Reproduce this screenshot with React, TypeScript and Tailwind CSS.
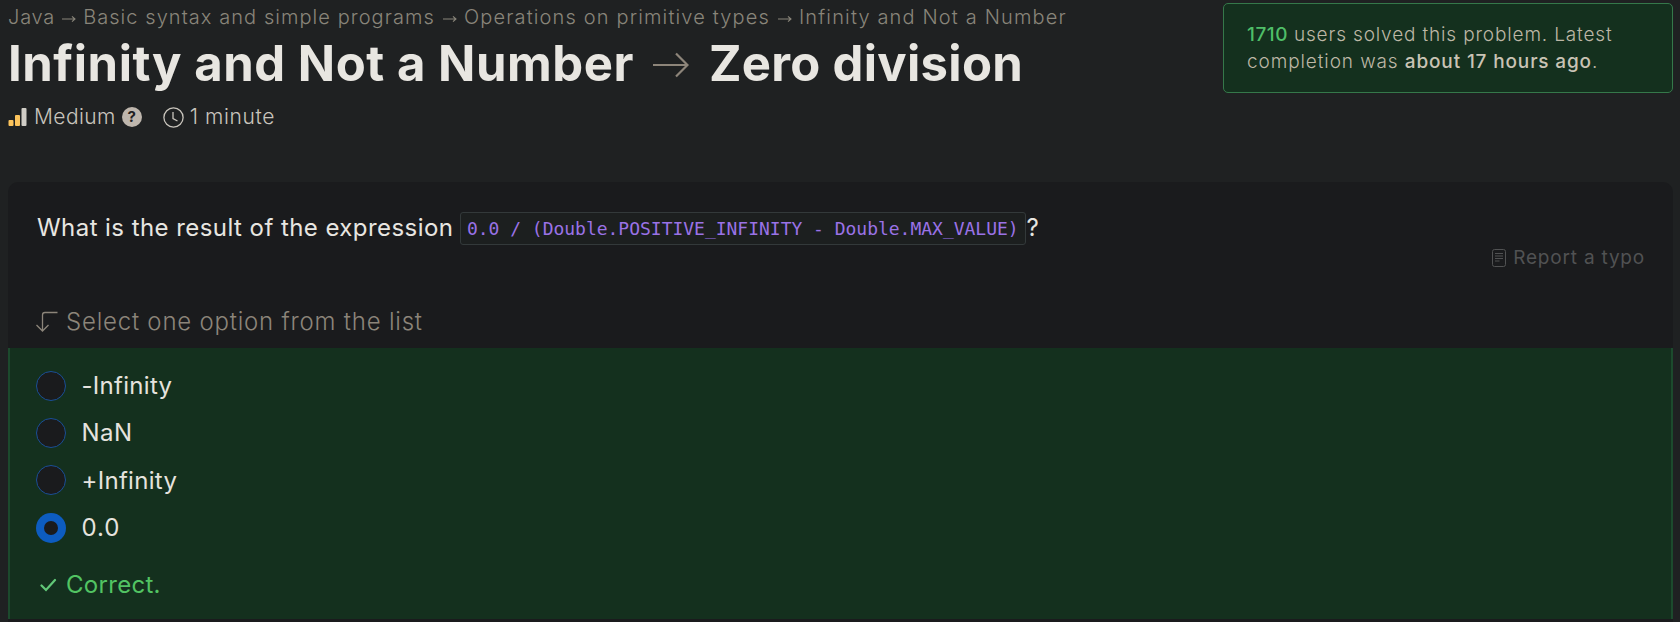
import type { ReactNode } from "react";

function CrumbArrow({ className }: { className: string }) {
  return (
    <svg className={className} width="14" height="8" viewBox="0 0 14 8" fill="none" stroke="currentColor" strokeWidth="1.1">
      <path d="M0 4H13M10 1.3L13 4L10 6.7" />
    </svg>
  );
}

function Option({ label, spacing, checked = false }: { label: string; spacing: string; checked?: boolean }) {
  return (
    <label className="flex h-[47.3px] items-center">
      <span
        className={
          checked
            ? "flex size-[30px] shrink-0 items-center justify-center rounded-full bg-[#0d5cc0]"
            : "size-[30px] shrink-0 rounded-full border border-[#1a4f96] bg-[#1a1b1d]"
        }
      >
        {checked && <span className="size-[14px] rounded-full bg-[#1a1b1d]" />}
      </span>
      <span className={`mt-px ml-[15.5px] text-[24px] leading-[30px] text-[#e6e3de] ${spacing}`}>{label}</span>
    </label>
  );
}

function Crumb({ children, className = "" }: { children: ReactNode; className?: string }) {
  return <span className={className}>{children}</span>;
}

export default function App() {
  return (
    <div className="flex h-[622px] w-[1680px] flex-col overflow-hidden bg-[#1f2122] pr-[7px] pl-2 font-['Inter',sans-serif] whitespace-nowrap">
      <header className="flex h-[182px] shrink-0 items-start justify-between">
        <div>
          <nav className="flex h-[35px] items-center text-[20px] leading-[35px] font-light text-[#89857a]">
            <Crumb className="tracking-[0.8px]">Java</Crumb>
            <CrumbArrow className="mt-[3px] ml-[7px]" />
            <Crumb className="ml-[7px] tracking-[1.06px]">Basic syntax and simple programs</Crumb>
            <CrumbArrow className="mt-[3px] ml-[8px]" />
            <Crumb className="ml-[7px] tracking-[1.15px]">Operations on primitive types</Crumb>
            <CrumbArrow className="mt-[3px] ml-[8px]" />
            <Crumb className="ml-[7px] tracking-[1.15px]">Infinity and Not a Number</Crumb>
          </nav>
          <h1 className="flex h-[58px] items-center text-[49px] leading-[58px] font-bold text-[#e8e6e1]">
            <span className="tracking-[0.54px]">Infinity and Not a Number</span>
            <svg className="mt-[2px] ml-[19px] shrink-0" width="36" height="26" viewBox="0 0 36 26" fill="none" stroke="#8d857a" strokeWidth="2.2">
              <path d="M0 13H34M23 1.5L34.5 13L23 24.5" />
            </svg>
            <span className="ml-[20px] tracking-[0.3px]">Zero division</span>
          </h1>
          <div className="mt-[10px] flex h-[28px] items-center text-[21px] leading-[28px] font-light text-[#c9c5bd]">
            <svg width="19" height="18" viewBox="0 0 19 18">
              <rect x="0.5" y="12" width="5" height="6" rx="1" fill="#fcc45c" />
              <rect x="7" y="7" width="5" height="11" rx="1" fill="#fcc45c" />
              <rect x="13.5" y="0" width="5" height="18" rx="1" fill="#d0cdc6" />
            </svg>
            <span className="ml-[7px] tracking-[0.4px]">Medium</span>
            <span className="ml-[6px] flex size-5 items-center justify-center rounded-full bg-[#beb6ad] text-[15px] leading-5 font-bold text-[#1f2122]">
              ?
            </span>
            <svg className="ml-[21px]" width="21" height="21" viewBox="0 0 21 21" fill="none" stroke="#c9c5bd" strokeWidth="1.3">
              <circle cx="10.5" cy="10.5" r="9.6" />
              <path d="M10 5V11.5L14.5 14" />
            </svg>
            <span className="ml-[6px] tracking-[0.6px]">1 minute</span>
          </div>
        </div>
        <aside className="mt-[3px] h-[90px] w-[450px] rounded-[5px] border border-[#35784a] bg-[#14301e] pt-[17px] pl-[23px] text-[19px] leading-[27px] font-light text-[#bdb7a6]">
          <p>
            <span className="font-medium tracking-[0.5px] text-[#4fbe68]">1710</span>
            <span className="ml-[6px] tracking-[0.85px]">users solved this problem. Latest</span>
          </p>
          <p className="tracking-[0.9px]">
            completion was <span className="font-medium tracking-[0.85px] text-[#c9c3b5]">about 17 hours ago</span>.
          </p>
        </aside>
      </header>

      <main className="flex flex-1 flex-col rounded-t-[10px] bg-[#1a1b1d]">
        <section className="flex h-[166px] shrink-0 flex-col px-[28px]">
          <div className="mt-[30px] flex h-[33px] items-center text-[24px] leading-[33px] text-[#e8e6e1]">
            <span className="-mt-[3px] ml-px tracking-[0.44px]">What is the result of the expression</span>
            <code className="ml-[7px] flex h-[33px] w-[566px] items-center rounded-[3px] border border-[#33393a] bg-[#1c1f1f] pl-[5.5px] font-['DejaVu_Sans_Mono',monospace] text-[18px] tracking-[-0.02px] text-[#9a72e6]">
              0.0 / (Double.POSITIVE_INFINITY - Double.MAX_VALUE)
            </code>
            <span className="-mt-[3px]">?</span>
          </div>
          <div className="flex h-[26px] items-center justify-end text-[19px] leading-[26px] text-[#515253]">
            <svg width="14" height="18" viewBox="0 0 14 18" fill="none" stroke="currentColor" strokeWidth="1">
              <rect x="0.5" y="0.5" width="13" height="17" rx="2" />
              <path d="M3 4.5H11M3 7H11M3 9.5H11M3 12H7.5" />
            </svg>
            <span className="ml-[7px] tracking-[0.8px]">Report a typo</span>
          </div>
          <div className="mt-[36px] flex h-[30px] items-center text-[24px] leading-[30px] font-light text-[#8c857a]">
            <svg width="22" height="22" viewBox="0 0 22 22" fill="none" stroke="currentColor" strokeWidth="1.3">
              <path d="M21.5 1.5H9Q6.5 1.5 6.5 4V20M0.5 14L6.5 20L12.5 14" />
            </svg>
            <span className="ml-[8px] tracking-[0.78px]">Select one option from the list</span>
          </div>
        </section>

        <section className="h-[271px] shrink-0 border-x-[2px] border-[#1c4a2d] bg-[#14301e] px-[26px] pt-[14px]">
          <Option label="-Infinity" spacing="tracking-[0.3px]" />
          <Option label="NaN" spacing="tracking-[0.5px]" />
          <Option label="+Infinity" spacing="tracking-[0.3px]" />
          <Option label="0.0" spacing="tracking-[0.9px]" checked />
          <div className="mt-[19px] flex h-[30px] items-center text-[24px] leading-[30px] text-[#52c463]">
            <svg className="ml-[4px]" width="17" height="14" viewBox="0 0 17 14" fill="none" stroke="#62c878" strokeWidth="2.2" strokeLinecap="round">
              <path d="M1.5 7.5L6 12L15 2" />
            </svg>
            <span className="ml-[9px] tracking-[0.3px]">Correct.</span>
          </div>
        </section>
      </main>
    </div>
  );
}
